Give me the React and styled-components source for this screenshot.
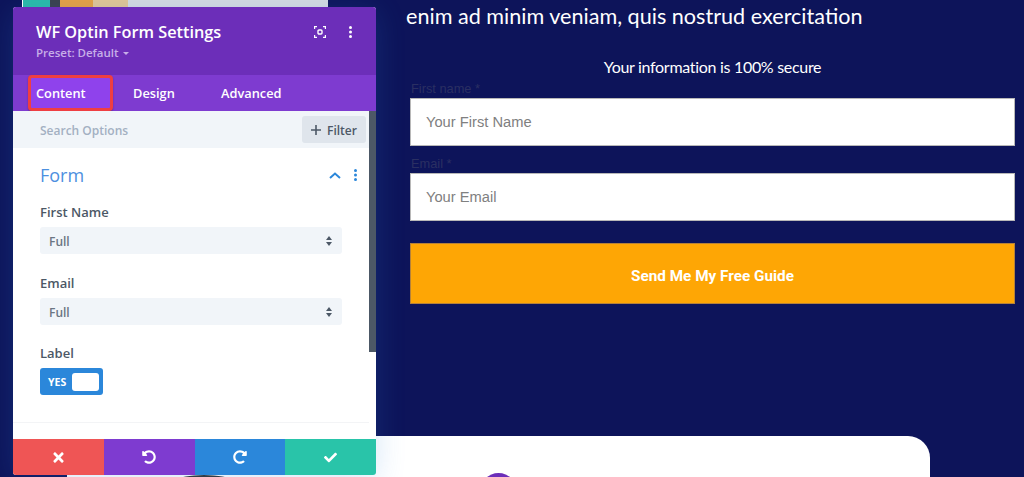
import React from "react";
import styled, { createGlobalStyle } from "styled-components";
import { FaTimes, FaUndoAlt, FaRedoAlt, FaCheck } from "react-icons/fa";

const GlobalStyle = createGlobalStyle`
  html, body {
    margin: 0;
    padding: 0;
    height: 100%;
    overflow: hidden;
    background: #0d145a;
  }
`;

const Page = styled.div`
  position: relative;
  width: 1024px;
  height: 477px;
  display: flex;
  flex-direction: column;
  overflow: hidden;
  background: #0d145a;
`;

const TopRow = styled.div`
  height: 436px;
  flex: none;
  display: grid;
  grid-template-columns: 410px 605px;
`;

const HeroImage = styled.div`
  margin-left: 22px;
  width: 306px;
  height: 8px;
  background: linear-gradient(
    90deg,
    #fff 0 1px,
    #2bbaa8 1px 28px,
    #3a3f4a 28px 38px,
    #e8a040 38px 71px,
    #e3c594 71px 106px,
    #d6dbe0 106px
  );
`;

const Content = styled.main`
  display: flex;
  flex-direction: column;
  padding-top: 4px;
`;

const Lead = styled.h2`
  margin: 0 0 0 -4px;
  font: 400 21.6px/24px Lato, sans-serif;
  white-space: nowrap;
  color: #fff;
`;

const SecureNote = styled.p`
  margin: 29px 0 0;
  font: 400 16px/20px Lato, sans-serif;
  letter-spacing: -0.3px;
  color: #fff;
  text-align: center;
`;

const Field = styled.div`
  display: flex;
  flex-direction: column;
  margin-top: ${(p) => p.$top}px;
`;

const FieldLabel = styled.label`
  font: 400 12.8px/14px "Liberation Sans", Arial, sans-serif;
  color: #2a2f62;
  margin: 0 0 2px 1px;
`;

const TextInput = styled.div`
  box-sizing: border-box;
  height: 48px;
  display: flex;
  align-items: center;
  padding-left: 15px;
  background: #fff;
  border: 1px solid #b8b8b8;
  font: 400 14.7px "Liberation Sans", Arial, sans-serif;
  color: #808080;
`;

const SubmitButton = styled.div`
  box-sizing: border-box;
  height: 61px;
  margin-top: 22px;
  padding-top: 5px;
  display: flex;
  align-items: center;
  justify-content: center;
  background: #fea605;
  border: 1px solid #b5813a;
  font: 700 15.3px Roboto, sans-serif;
  color: #fff;
`;

const BottomCard = styled.section`
  position: relative;
  flex: 1;
  margin: 0 94px 0 67px;
  background: #fff;
  border-radius: 22px 22px 0 0;
  overflow: hidden;
`;

const Avatar = styled.span`
  position: absolute;
  left: ${(p) => p.$left}px;
  top: ${(p) => p.$top}px;
  width: ${(p) => p.$w}px;
  height: ${(p) => p.$h}px;
  border-radius: 50%;
  background: ${(p) => p.$color};
`;

const Panel = styled.aside`
  position: absolute;
  left: 13px;
  top: 7px;
  width: 363px;
  height: 468px;
  display: flex;
  flex-direction: column;
  border-radius: 3px;
  overflow: hidden;
  background: #fff;
  font-family: "Open Sans", sans-serif;
  box-shadow: 0 5px 30px rgba(43, 135, 218, 0.2);
`;

const PanelHeader = styled.header`
  box-sizing: border-box;
  height: 68px;
  flex: none;
  padding: 14px 24px 0 23px;
  background: #6c2eb9;
  display: flex;
  justify-content: space-between;
`;

const PanelTitle = styled.h3`
  margin: 0;
  font: 600 16.3px/22px "Open Sans", sans-serif;
  color: #fff;
`;

const Preset = styled.div`
  margin-top: 3px;
  font: 600 11.5px/14px "Open Sans", sans-serif;
  color: #c7aee8;
  display: flex;
  align-items: center;
  gap: 4px;
`;

const Caret = styled.span`
  width: 0;
  height: 0;
  border: 3px solid transparent;
  border-top: 3px solid #c7aee8;
  margin-top: 3px;
`;

const HeaderIcons = styled.div`
  display: flex;
  align-items: center;
  gap: 23px;
  height: 22px;
`;

const Tabs = styled.nav`
  height: 36px;
  flex: none;
  padding-left: 15px;
  display: flex;
  background: #7e3bd0;
`;

const Tab = styled.div`
  box-sizing: border-box;
  width: ${(p) => p.$width}px;
  padding-left: ${(p) => p.$pad}px;
  display: flex;
  align-items: center;
  font: 600 12.8px "Open Sans", sans-serif;
  color: #fff;
  ${(p) =>
    p.$active &&
    `
    background: #8f42ec;
    border: 3px solid #ef3e42;
    border-radius: 4px;
    box-shadow: 0 1px 2px rgba(0, 0, 0, 0.25);
  `}
`;

const SearchBar = styled.div`
  height: 37px;
  flex: none;
  display: flex;
  align-items: center;
  justify-content: space-between;
  padding: 0 10px 0 27px;
  background: #f1f5f9;
  font: 600 12px "Open Sans", sans-serif;
  color: #a3b0c2;
`;

const SearchLabel = styled.span`
  margin-top: 2px;
`;

const FilterButton = styled.div`
  box-sizing: border-box;
  width: 64px;
  height: 27px;
  padding-top: 1px;
  display: flex;
  align-items: center;
  justify-content: center;
  gap: 6px;
  border-radius: 3px;
  background: #dfe5ec;
  color: #4c5866;
`;

const PanelBody = styled.div`
  position: relative;
  flex: 1;
  padding: 15px 34px 0 27px;
`;

const Scrollbar = styled.div`
  position: absolute;
  right: 0;
  top: -37px;
  width: 7px;
  height: 241px;
  background: #4c5866;
`;

const SectionHead = styled.div`
  display: flex;
  align-items: center;
  justify-content: space-between;
  height: 24px;
`;

const SectionTitle = styled.div`
  font: 400 18px/24px "Open Sans", sans-serif;
  color: #4c90e0;
`;

const SectionIcons = styled.div`
  display: flex;
  align-items: center;
  gap: 13px;
  margin-right: -15px;
`;

const Option = styled.div`
  margin-top: ${(p) => p.$top}px;
`;

const OptionLabel = styled.div`
  font: 600 13px/18px "Open Sans", sans-serif;
  color: #4c5866;
  margin-bottom: 6px;
`;

const Select = styled.div`
  height: 27px;
  box-sizing: border-box;
  padding: 1px 10px 0 9px;
  display: flex;
  align-items: center;
  justify-content: space-between;
  background: #f1f5f9;
  border-radius: 3px;
  font: 600 12px "Open Sans", sans-serif;
  color: #6b7683;
`;

const Toggle = styled.div`
  box-sizing: border-box;
  width: 63px;
  height: 27px;
  padding: 0 4px 0 8px;
  display: flex;
  align-items: center;
  justify-content: space-between;
  background: #2b87da;
  border-radius: 3px;
  font: 700 10.5px "Open Sans", sans-serif;
  color: #fff;
`;

const ToggleKnob = styled.span`
  width: 27px;
  height: 18px;
  border-radius: 3px;
  background: #fff;
`;

const Divider = styled.div`
  position: absolute;
  left: 0;
  right: 7px;
  bottom: 16px;
  height: 1px;
  background: #f3f4f6;
`;

const Footer = styled.footer`
  height: 36px;
  flex: none;
  display: grid;
  grid-template-columns: repeat(4, 1fr);
`;

const FooterButton = styled.div`
  display: flex;
  align-items: center;
  justify-content: center;
  background: ${(p) => p.$color};
  color: #fff;
`;

const FocusIcon = () => (
  <svg width="12" height="12" viewBox="0 0 12 12" fill="none" stroke="#fff" strokeWidth="1.2">
    <path d="M.6 3V.6H3M9 .6h2.4V3M11.4 9v2.4H9M3 11.4H.6V9" />
    <rect x="4" y="4" width="4" height="4" rx="1" strokeWidth="1.4" />
  </svg>
);

const Dots = ({ color }) => (
  <svg width="3" height="12" viewBox="0 0 3 12" fill={color}>
    <circle cx="1.5" cy="1.5" r="1.5" />
    <circle cx="1.5" cy="6" r="1.5" />
    <circle cx="1.5" cy="10.5" r="1.5" />
  </svg>
);

const ChevronUp = () => (
  <svg width="12" height="7" viewBox="0 0 12 7" fill="none" stroke="#2b87da" strokeWidth="2">
    <path d="M1 6l5-4.5L11 6" />
  </svg>
);

const SelectArrows = () => (
  <svg width="6" height="10" viewBox="0 0 6 10" fill="#4c5866">
    <path d="M3 0l3 4H0zM3 10L0 6h6z" />
  </svg>
);

const PlusIcon = () => (
  <svg width="10" height="10" viewBox="0 0 10 10" stroke="#4c5866" strokeWidth="1.6">
    <path d="M5 0v10M0 5h10" />
  </svg>
);

export default function App() {
  return (
    <Page>
      <GlobalStyle />
      <TopRow>
        <div>
          <HeroImage />
        </div>
        <Content>
          <Lead>enim ad minim veniam, quis nostrud exercitation</Lead>
          <SecureNote>Your information is 100% secure</SecureNote>
          <Field $top={5}>
            <FieldLabel>First name *</FieldLabel>
            <TextInput>Your First Name</TextInput>
          </Field>
          <Field $top={11}>
            <FieldLabel>Email *</FieldLabel>
            <TextInput>Your Email</TextInput>
          </Field>
          <SubmitButton>Send Me My Free Guide</SubmitButton>
        </Content>
      </TopRow>
      <BottomCard>
        <Avatar $left={111} $top={39} $w={52} $h={10} $color="#333" />
        <Avatar $left={413} $top={37} $w={37} $h={37} $color="#6c2eb9" />
      </BottomCard>
      <Panel>
        <PanelHeader>
          <div>
            <PanelTitle>WF Optin Form Settings</PanelTitle>
            <Preset>
              Preset: Default <Caret />
            </Preset>
          </div>
          <HeaderIcons>
            <FocusIcon />
            <Dots color="#fff" />
          </HeaderIcons>
        </PanelHeader>
        <Tabs>
          <Tab $width={85} $pad={5} $active>Content</Tab>
          <Tab $width={88} $pad={20}>Design</Tab>
          <Tab $width={120} $pad={20}>Advanced</Tab>
        </Tabs>
        <SearchBar>
          <SearchLabel>Search Options</SearchLabel>
          <FilterButton>
            <PlusIcon /> Filter
          </FilterButton>
        </SearchBar>
        <PanelBody>
          <Scrollbar />
          <SectionHead>
            <SectionTitle>Form</SectionTitle>
            <SectionIcons>
              <ChevronUp />
              <Dots color="#2b87da" />
            </SectionIcons>
          </SectionHead>
          <Option $top={16}>
            <OptionLabel>First Name</OptionLabel>
            <Select>
              Full <SelectArrows />
            </Select>
          </Option>
          <Option $top={20}>
            <OptionLabel>Email</OptionLabel>
            <Select>
              Full <SelectArrows />
            </Select>
          </Option>
          <Option $top={19}>
            <OptionLabel>Label</OptionLabel>
            <Toggle>
              YES <ToggleKnob />
            </Toggle>
          </Option>
          <Divider />
        </PanelBody>
        <Footer>
          <FooterButton $color="#ef5555"><FaTimes size={15} /></FooterButton>
          <FooterButton $color="#7e3bd0"><FaUndoAlt size={14} /></FooterButton>
          <FooterButton $color="#2b87da"><FaRedoAlt size={14} /></FooterButton>
          <FooterButton $color="#29c4a9"><FaCheck size={13} /></FooterButton>
        </Footer>
      </Panel>
    </Page>
  );
}
